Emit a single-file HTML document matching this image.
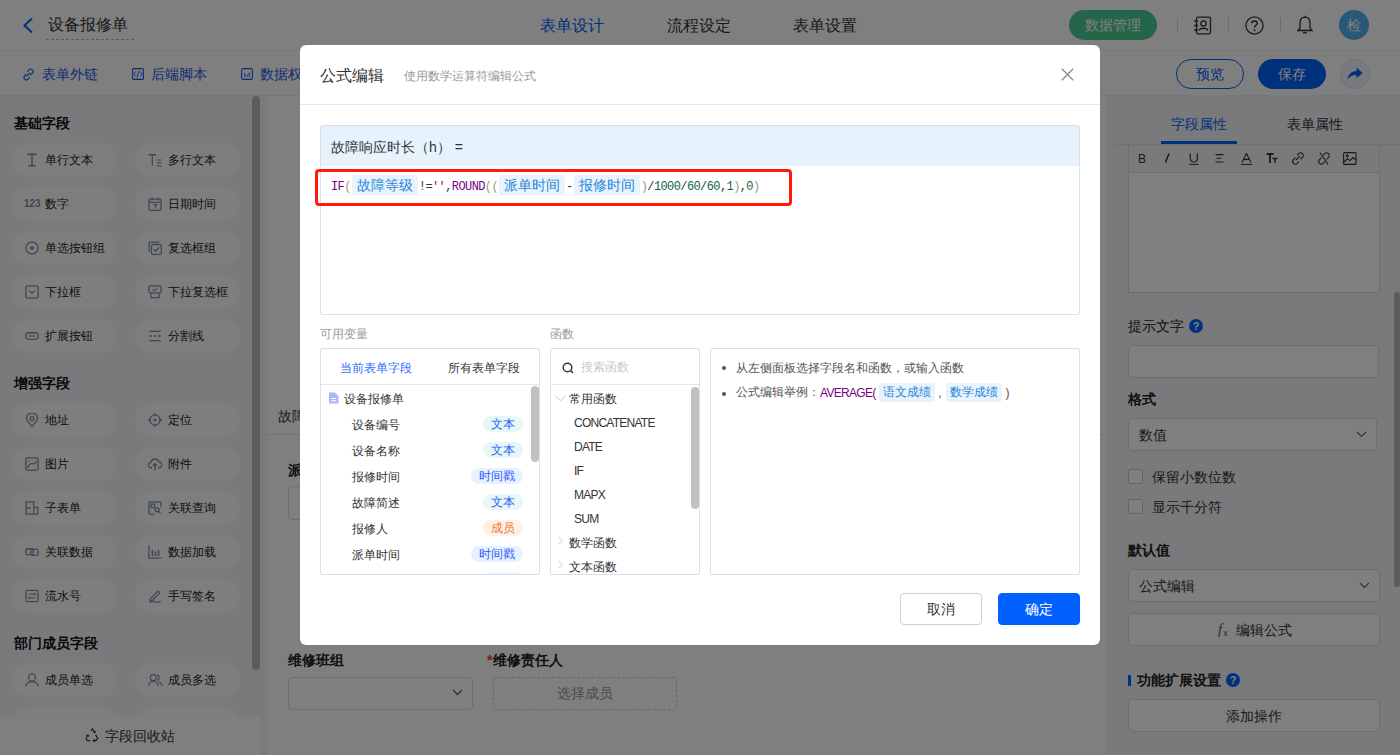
<!DOCTYPE html>
<html><head><meta charset="utf-8">
<style>
*{box-sizing:border-box;margin:0;padding:0}
html,body{width:1400px;height:755px;overflow:hidden;background:#fff;font-family:"Liberation Sans",sans-serif;color:#333}
.abs{position:absolute}
svg{display:block}
/* header */
#hdr{position:absolute;left:0;top:0;width:1400px;height:51px;background:#fff;border-bottom:1px solid #eceef2}
#tb{position:absolute;left:0;top:51px;width:1400px;height:45px;background:#fff;border-bottom:1px solid #eef0f3}
#side{position:absolute;left:0;top:96px;width:268px;height:659px;background:#f4f5f8;overflow:hidden}
#canvas{position:absolute;left:268px;top:96px;width:838px;height:659px;background:#fff}
#rp{position:absolute;left:1106px;top:96px;width:294px;height:659px;background:#f4f5f8;overflow:hidden}
.t{position:absolute;white-space:nowrap;line-height:1}
.pill{position:absolute;width:105px;height:34px;border-radius:17px;background:#fdfdfe}
.pill .ic{position:absolute;left:13px;top:10px}
.pill span{position:absolute;left:33px;top:11px;font-size:12px;line-height:12px;color:#222;white-space:nowrap}
.sh{position:absolute;left:14px;font-size:14px;font-weight:bold;color:#111;line-height:14px;white-space:nowrap}
#ov{position:absolute;left:0;top:0;width:1400px;height:755px;background:rgba(0,0,0,.5)}
#modal{position:absolute;left:300px;top:45px;width:800px;height:600px;background:#fff;border-radius:6px;overflow:hidden}

.mt{position:absolute;white-space:nowrap;line-height:1}
.code{position:absolute;left:10px;top:49px;height:20px;display:flex;align-items:center;font-family:"Liberation Mono",monospace;font-size:12px;letter-spacing:-0.6px;white-space:pre;color:#333}
.kw,.br,.nm,.st,.op{position:relative;top:1.5px}.kw{color:#770088}.br{color:#a09a78}.nm{color:#116644}.st{color:#aa1111}
.tok{display:inline-block;letter-spacing:0;height:20px;line-height:20px;padding:0 5px;margin:0 1px;border-radius:3px;background:#e8f3fd;color:#1f87d6;font-family:"Liberation Sans",sans-serif;font-size:14px}
.panel{position:absolute;top:303px;height:227px;border:1px solid #dcdfe6;border-radius:2px;background:#fff;overflow:hidden}
.vi{position:absolute;left:31px;font-size:12px;line-height:12px;color:#333;white-space:nowrap}
.tag{position:absolute;right:16px;height:16px;line-height:16px;padding:0 8px;border-radius:8px;font-size:12px;white-space:nowrap}
.tg1{background:#e6f7f5;color:#2a5cff}.tg2{background:#e8f1ff;color:#2a5cff}.tg3{background:#fff0e6;color:#f07a30}
.fi{position:absolute;left:23px;font-size:12px;line-height:12px;color:#333;white-space:nowrap;letter-spacing:-0.75px}
.fg{position:absolute;left:18px;font-size:12px;line-height:12px;color:#333;white-space:nowrap}
.btn{position:absolute;top:548px;height:32px;border-radius:4px;font-size:14px;line-height:30px;text-align:center}
</style></head><body>

<!-- ===== HEADER ===== -->
<div id="hdr">
  <svg class="abs" style="left:22px;top:17px" width="12" height="17" viewBox="0 0 12 17"><path d="M10 1.5 L2.5 8.5 L10 15.5" fill="none" stroke="#0062fa" stroke-width="2"/></svg>
  <div class="t" style="left:48px;top:17px;font-size:16px;color:#333">设备报修单</div>
  <div class="abs" style="left:46px;top:39px;width:88px;border-top:1px dashed #bbb"></div>
  <div class="t" style="left:540px;top:18px;font-size:16px;color:#0062fa">表单设计</div>
  <div class="t" style="left:667px;top:18px;font-size:16px;color:#333">流程设定</div>
  <div class="t" style="left:793px;top:18px;font-size:16px;color:#333">表单设置</div>
  <div class="abs" style="left:1069px;top:10px;width:88px;height:30px;background:#4acb94;border-radius:15px"></div>
  <div class="t" style="left:1085px;top:18px;font-size:14px;color:#fff">数据管理</div>
  <div class="abs" style="left:1177px;top:18px;width:1px;height:14px;background:#d8d8d8"></div>
  <svg class="abs" style="left:1193px;top:16px" width="19" height="19" viewBox="0 0 19 19"><g fill="none" stroke="#333" stroke-width="1.3"><rect x="3.5" y="1.2" width="14" height="16.6" rx="1.5"/><circle cx="10.5" cy="7.5" r="2.6"/><path d="M6.2 14.5 C6.8 11.5 14.2 11.5 14.8 14.5"/><path d="M1.2 5 H5 M1.2 9.5 H5 M1.2 14 H5"/></g></svg>
  <div class="abs" style="left:1228px;top:18px;width:1px;height:14px;background:#d8d8d8"></div>
  <svg class="abs" style="left:1245px;top:16px" width="19" height="19" viewBox="0 0 19 19"><circle cx="9.5" cy="9.5" r="8.6" fill="none" stroke="#333" stroke-width="1.3"/><path d="M6.8 7.3 C6.8 4.2 12.2 4.2 12.2 7.3 C12.2 9.4 9.5 9.4 9.5 11.6" fill="none" stroke="#333" stroke-width="1.4"/><circle cx="9.5" cy="14.2" r="0.95" fill="#333"/></svg>
  <div class="abs" style="left:1280px;top:18px;width:1px;height:14px;background:#d8d8d8"></div>
  <svg class="abs" style="left:1297px;top:15px" width="16" height="20" viewBox="0 0 16 20"><g fill="none" stroke="#333" stroke-width="1.3"><path d="M8 2.2 C4.5 2.2 3 5 3 8 V13 L1 15.5 H15 L13 13 V8 C13 5 11.5 2.2 8 2.2 Z"/><path d="M8 0.8 V2.2"/><path d="M6 17.8 H10"/></g></svg>
  <div class="abs" style="left:1339px;top:10px;width:30px;height:30px;background:#4fb0f0;border-radius:50%"></div>
  <div class="t" style="left:1347px;top:18px;font-size:14px;color:#fff">检</div>
</div>

<!-- ===== TOOLBAR ===== -->
<div id="tb">
  <svg class="abs" style="left:22px;top:17px" width="13" height="13" viewBox="0 0 13 13"><g fill="none" stroke="#1f55e6" stroke-width="1.2"><path d="M5.2 3.6 L7 1.8 a2.4 2.4 0 0 1 3.4 3.4 L8.6 7"/><path d="M7.8 9.4 L6 11.2 a2.4 2.4 0 0 1 -3.4 -3.4 L4.4 6"/><path d="M4.6 8.4 L8.4 4.6"/></g></svg>
  <div class="t" style="left:42px;top:16px;font-size:14px;color:#1f55e6">表单外链</div>
  <svg class="abs" style="left:132px;top:17px" width="12" height="12" viewBox="0 0 12 12"><g fill="none" stroke="#1f55e6" stroke-width="1.1"><rect x="0.6" y="0.6" width="10.8" height="10.8" rx="1"/><path d="M3.8 3.5 L1.8 6 L3.8 8.5 M8.2 3.5 L10.2 6 L8.2 8.5 M7 2.5 L5 9.5" stroke-width="0.9"/></g></svg>
  <div class="t" style="left:151px;top:16px;font-size:14px;color:#1f55e6">后端脚本</div>
  <svg class="abs" style="left:241px;top:17px" width="12" height="12" viewBox="0 0 12 12"><g fill="none" stroke="#1f55e6" stroke-width="1.1"><rect x="0.6" y="0.6" width="10.8" height="10.8" rx="1.5"/><path d="M3.8 5 V8.8 M6 6.5 V8.8 M8.2 4.5 V8.8" stroke-width="1"/></g></svg>
  <div class="t" style="left:260px;top:16px;font-size:14px;color:#1f55e6">数据权限</div>
  <div class="abs" style="left:1176px;top:8px;width:68px;height:30px;border:1.5px solid #0062fa;border-radius:15px"></div>
  <div class="t" style="left:1196px;top:16px;font-size:14px;color:#0062fa">预览</div>
  <div class="abs" style="left:1258px;top:8px;width:68px;height:30px;background:#0062fa;border-radius:15px"></div>
  <div class="t" style="left:1278px;top:16px;font-size:14px;color:#fff">保存</div>
  <div class="abs" style="left:1340px;top:8px;width:30px;height:30px;background:#f0f4fe;border:1px solid #dde4f4;border-radius:50%"></div>
  <svg class="abs" style="left:1346px;top:15px" width="18" height="16" viewBox="0 0 18 16"><path d="M10.5 1.5 L16.5 7 L10.5 12.2 V9 C6 9 3.5 10.5 1.5 14 C2 8.5 5 5.5 10.5 5 Z" fill="#0062fa"/></svg>
</div>

<!-- ===== SIDEBAR ===== -->
<div id="side">
  <div class="sh" style="top:20px">基础字段</div>
  <div class="pill" style="left:12px;top:47px"><svg class="ic" width="14" height="14" viewBox="0 0 12 12"><g fill="none" stroke="#7d8db0" stroke-width="1.1"><path d="M1.8 1 H10.2 M6 1 V11 M2.8 11 H9.2" stroke-width="1.3"/></g></svg><span>单行文本</span></div>
  <div class="pill" style="left:135px;top:47px"><svg class="ic" width="14" height="14" viewBox="0 0 12 12"><g fill="none" stroke="#7d8db0" stroke-width="1.1"><path d="M0.5 1.5 H7 M3.7 1.5 V11"/><path d="M7.5 6 H11.5 M7.5 8.5 H11.5 M7.5 11 H11.5" stroke-width="1"/></g></svg><span>多行文本</span></div>
  <div class="pill" style="left:12px;top:91px"><b class="ic" style="left:12px;top:12px;font-size:10px;line-height:10px;font-weight:bold;color:#7d8db0;letter-spacing:-0.1px">123</b><span>数字</span></div>
  <div class="pill" style="left:135px;top:91px"><svg class="ic" width="14" height="14" viewBox="0 0 12 12"><g fill="none" stroke="#7d8db0" stroke-width="1.1"><rect x="0.8" y="1.8" width="10.4" height="9.6" rx="1"/><path d="M0.8 4.6 H11.2 M3.5 0.5 V3 M8.5 0.5 V3"/><path d="M4.5 6.6 H7.5 L5.8 9.8" stroke-width="1"/></g></svg><span>日期时间</span></div>
  <div class="pill" style="left:12px;top:135px"><svg class="ic" width="14" height="14" viewBox="0 0 12 12"><g fill="none" stroke="#7d8db0" stroke-width="1.1"><circle cx="6" cy="6" r="5.2"/><circle cx="6" cy="6" r="1.6" fill="#7d8db0" stroke="none"/></g></svg><span>单选按钮组</span></div>
  <div class="pill" style="left:135px;top:135px"><svg class="ic" width="14" height="14" viewBox="0 0 12 12"><g fill="none" stroke="#7d8db0" stroke-width="1.1"><path d="M1 9.5 V1.5 Q1 1 1.5 1 H9.5"/><rect x="3" y="3" width="8.4" height="8.4" rx="1"/><path d="M4.8 7 L6.6 8.8 L9.6 5.4"/></g></svg><span>复选框组</span></div>
  <div class="pill" style="left:12px;top:179px"><svg class="ic" width="14" height="14" viewBox="0 0 12 12"><g fill="none" stroke="#7d8db0" stroke-width="1.1"><rect x="0.8" y="0.8" width="10.4" height="10.4" rx="1"/><path d="M3.6 5 L6 7.2 L8.4 5"/></g></svg><span>下拉框</span></div>
  <div class="pill" style="left:135px;top:179px"><svg class="ic" width="14" height="14" viewBox="0 0 12 12"><g fill="none" stroke="#7d8db0" stroke-width="1.1"><rect x="0.8" y="0.8" width="10.4" height="6" rx="1"/><path d="M2.5 6.8 V10.8 H9.5 V6.8"/><path d="M4 3.8 L5.6 5 L8 2.4" stroke-width="1"/></g></svg><span>下拉复选框</span></div>
  <div class="pill" style="left:12px;top:223px"><svg class="ic" width="14" height="14" viewBox="0 0 12 12"><g fill="none" stroke="#7d8db0" stroke-width="1.1"><rect x="0.6" y="3.2" width="10.8" height="5.6" rx="2.8"/><path d="M3.5 6 H8.5"/></g></svg><span>扩展按钮</span></div>
  <div class="pill" style="left:135px;top:223px"><svg class="ic" width="14" height="14" viewBox="0 0 12 12"><g fill="none" stroke="#7d8db0" stroke-width="1.1"><path d="M1 2 H11 M1 6 H3.5 M5 6 H7 M8.5 6 H11 M1 10 H11" stroke-width="1.1"/></g></svg><span>分割线</span></div>
  <div class="sh" style="top:280px">增强字段</div>
  <div class="pill" style="left:12px;top:307px"><svg class="ic" width="14" height="14" viewBox="0 0 12 12"><g fill="none" stroke="#7d8db0" stroke-width="1.1"><path d="M6 11.4 C2.5 8 1.2 6 1.2 4.6 A4.8 4.6 0 0 1 10.8 4.6 C10.8 6 9.5 8 6 11.4 Z"/><circle cx="6" cy="4.8" r="1.6"/></g></svg><span>地址</span></div>
  <div class="pill" style="left:135px;top:307px"><svg class="ic" width="14" height="14" viewBox="0 0 12 12"><g fill="none" stroke="#7d8db0" stroke-width="1.1"><circle cx="6" cy="6" r="4.4"/><circle cx="6" cy="6" r="1.2" fill="#7d8db0" stroke="none"/><path d="M6 0 V2.4 M6 9.6 V12 M0 6 H2.4 M9.6 6 H12"/></g></svg><span>定位</span></div>
  <div class="pill" style="left:12px;top:351px"><svg class="ic" width="14" height="14" viewBox="0 0 12 12"><g fill="none" stroke="#7d8db0" stroke-width="1.1"><rect x="0.8" y="0.8" width="10.4" height="10.4" rx="1"/><path d="M2.2 9.5 C3 6 5 5.5 7 5.8 C8.5 6 9.5 5 10 3.5 M2.8 3.5 L3.8 3"/></g></svg><span>图片</span></div>
  <div class="pill" style="left:135px;top:351px"><svg class="ic" width="14" height="14" viewBox="0 0 12 12"><g fill="none" stroke="#7d8db0" stroke-width="1.1"><path d="M3.5 9.2 H2.8 A2.3 2.3 0 0 1 2.6 4.6 A3.5 3.5 0 0 1 9.4 4.2 A2.5 2.5 0 0 1 9.2 9.2 H8.5"/><path d="M6 11.5 V6 M4.2 7.6 L6 5.8 L7.8 7.6"/></g></svg><span>附件</span></div>
  <div class="pill" style="left:12px;top:395px"><svg class="ic" width="14" height="14" viewBox="0 0 12 12"><g fill="none" stroke="#7d8db0" stroke-width="1.1"><path d="M1 0.8 H7.5 V11.2 H1 Z M1 6 H5"/><path d="M7.5 5.5 H11 V11.2 H7.5"/></g></svg><span>子表单</span></div>
  <div class="pill" style="left:135px;top:395px"><svg class="ic" width="14" height="14" viewBox="0 0 12 12"><g fill="none" stroke="#7d8db0" stroke-width="1.1"><path d="M11.2 5.5 V1.8 Q11.2 0.8 10.2 0.8 H1.8 Q0.8 0.8 0.8 1.8 V10.2 Q0.8 11.2 1.8 11.2 H5.5"/><rect x="2.6" y="2.6" width="3" height="3"/><circle cx="7.8" cy="7.6" r="1.7"/><path d="M9 8.8 L10.8 10.6"/></g></svg><span>关联查询</span></div>
  <div class="pill" style="left:12px;top:439px"><svg class="ic" width="14" height="14" viewBox="0 0 12 12"><g fill="none" stroke="#7d8db0" stroke-width="1.1"><rect x="0.8" y="3.2" width="6.2" height="5" rx="1.2"/><rect x="5" y="3.8" width="6.2" height="5" rx="1.2"/></g></svg><span>关联数据</span></div>
  <div class="pill" style="left:135px;top:439px"><svg class="ic" width="14" height="14" viewBox="0 0 12 12"><g fill="none" stroke="#7d8db0" stroke-width="1.1"><path d="M0.8 0.5 V11.2 H11.5"/><path d="M3.8 9.5 V4 M6.4 9.5 V5.5 M9 9.5 V4.5" stroke-width="1.4"/></g></svg><span>数据加载</span></div>
  <div class="pill" style="left:12px;top:483px"><svg class="ic" width="14" height="14" viewBox="0 0 12 12"><g fill="none" stroke="#7d8db0" stroke-width="1.1"><rect x="0.8" y="1.2" width="10.4" height="9.6" rx="1"/><path d="M3 4.5 H9 L7.6 3.3 M9 7.5 H3 L4.4 8.7" stroke-width="1"/></g></svg><span>流水号</span></div>
  <div class="pill" style="left:135px;top:483px"><svg class="ic" width="14" height="14" viewBox="0 0 12 12"><g fill="none" stroke="#7d8db0" stroke-width="1.1"><path d="M2.2 8.2 L8.2 2.2 A1.2 1.2 0 0 1 9.8 3.8 L3.8 9.8 L1.8 10.2 Z"/><path d="M1 11.5 C3 10.5 5 10.5 6.5 11.2 C8 11.8 9.5 11 11 10.8" stroke-width="1"/></g></svg><span>手写签名</span></div>
  <div class="sh" style="top:540px">部门成员字段</div>
  <div class="pill" style="left:12px;top:567px"><svg class="ic" width="14" height="14" viewBox="0 0 12 12"><g fill="none" stroke="#7d8db0" stroke-width="1.1"><circle cx="6" cy="3.8" r="3"/><path d="M0.8 11.6 C1 8.5 3 7.4 6 7.4 C9 7.4 11 8.5 11.2 11.6"/></g></svg><span>成员单选</span></div>
  <div class="pill" style="left:135px;top:567px"><svg class="ic" width="15" height="14" viewBox="0 0 14 12"><g fill="none" stroke="#7d8db0" stroke-width="1.1"><circle cx="5" cy="3.8" r="2.8"/><path d="M0.6 11.6 C0.8 8.6 2.4 7.4 5 7.4 C7.6 7.4 9.2 8.6 9.4 11.6"/><path d="M8.2 1.2 A2.7 2.7 0 0 1 8.6 6.4 M10 7.8 C11.8 8.3 12.8 9.6 13 11.6"/></g></svg><span>成员多选</span></div>
  <div class="pill" style="left:12px;top:611px"><span>部门单选</span></div>
  <div class="pill" style="left:135px;top:611px"><span>部门多选</span></div>
  <div class="abs" style="left:252px;top:0px;width:8px;height:574px;background:#b8b8b8;border-radius:4px"></div>
  <div class="abs" style="left:0;top:621px;width:260px;height:38px;background:#fff"></div>
  <svg class="abs" style="left:85px;top:632px" width="15" height="14" viewBox="0 0 15 14"><g fill="none" stroke="#333" stroke-width="1.1"><path d="M5.8 2.6 L7.5 0.8 L9.6 4.4"/><path d="M10.6 6.6 L12.8 10.4 L10.8 12.6 H8.5"/><path d="M5.5 12.6 H2.2 L1 10.5 L3 7"/><path d="M8.2 3.8 L9.9 4.5 L10.4 2.8 M9.6 11.1 L8.3 12.6 L9.6 13.8 M3.8 8.6 L3.1 6.9 L1.4 7.5"/></g></svg>
  <div class="t" style="left:105px;top:633px;font-size:14px;color:#333">字段回收站</div>
</div>

<!-- ===== CANVAS ===== -->
<div id="canvas">
  <div class="t" style="left:10px;top:313px;font-size:14px;color:#333">故障响应</div>
  <div class="abs" style="left:0;top:338px;width:838px;height:1px;background:#e4e4e4"></div>
  <div class="t" style="left:20px;top:367px;font-size:14px;font-weight:bold;color:#222">派单时间</div>
  <div class="abs" style="left:20px;top:390px;width:184px;height:34px;border:1px solid #dcdcdc;border-radius:4px"></div>
  <div class="t" style="left:20px;top:557px;font-size:14px;font-weight:bold;color:#222">维修班组</div>
  <div class="abs" style="left:20px;top:581px;width:185px;height:33px;border:1px solid #dcdcdc;border-radius:4px"></div>
  <svg class="abs" style="left:184px;top:593px" width="11" height="7" viewBox="0 0 11 7"><path d="M1 1 L5.5 5.5 L10 1" fill="none" stroke="#666" stroke-width="1.3"/></svg>
  <div class="t" style="left:219px;top:557px;font-size:14px;font-weight:bold;color:#e23b3b">*</div>
  <div class="t" style="left:225px;top:557px;font-size:14px;font-weight:bold;color:#222">维修责任人</div>
  <div class="abs" style="left:225px;top:581px;width:184px;height:33px;border:1px dashed #cfcfcf;border-radius:4px"></div>
  <div class="t" style="left:289px;top:590px;font-size:14px;color:#999">选择成员</div>
</div>

<!-- ===== RIGHT PANEL ===== -->
<div id="rp">
  <div class="t" style="left:65px;top:21px;font-size:14px;color:#0062fa">字段属性</div>
  <div class="t" style="left:181px;top:21px;font-size:14px;color:#333">表单属性</div>
  <div class="abs" style="left:8px;top:48px;width:286px;height:1px;background:#e2e4ea"></div>
  <div class="abs" style="left:55px;top:45px;width:76px;height:3px;background:#0062fa"></div>
  <div class="abs" style="left:22px;top:49px;width:252px;height:148px;border:1px solid #dcdde2;border-top:none;background:#fff"></div>
  <div class="abs" style="left:23px;top:49px;width:250px;height:28px;background:#f4f5f8;border-bottom:1px solid #dcdde2"></div>
  <div class="t" style="left:32px;top:57px;font-size:12px;color:#333">B</div>
  <svg class="abs" style="left:58px;top:57px" width="6" height="10" viewBox="0 0 6 10"><path d="M5 0.5 L1.5 9.5" stroke="#333" stroke-width="1.5"/></svg>
  <svg class="abs" style="left:83px;top:57px" width="10" height="12" viewBox="0 0 10 12"><path d="M1.3 0.5 V5.5 A3.5 3.5 0 0 0 8.3 5.5 V0.5" fill="none" stroke="#333" stroke-width="1.2"/><path d="M0 11.4 H9.5" stroke="#333" stroke-width="1"/></svg>
  <svg class="abs" style="left:109px;top:58px" width="9" height="9" viewBox="0 0 9 9"><path d="M0.5 0.6 H8.5 M1.5 4.2 H6.5 M0.5 8 H8.5" stroke="#333" stroke-width="1.1"/></svg>
  <svg class="abs" style="left:135px;top:57px" width="11" height="12" viewBox="0 0 11 12"><path d="M1 9.5 L5.5 0.5 L10 9.5 M2.6 6.4 H8.4" fill="none" stroke="#333" stroke-width="1.1"/><path d="M0 11.4 H11" stroke="#333" stroke-width="1"/></svg>
  <svg class="abs" style="left:160px;top:57px" width="12" height="11" viewBox="0 0 12 11"><path d="M0.5 1 H7.5 M4 1 V10" stroke="#333" stroke-width="1.8"/><path d="M6.5 5.5 H11.5 M9 5.5 V10" stroke="#333" stroke-width="1.3"/></svg>
  <svg class="abs" style="left:185px;top:56px" width="14" height="13" viewBox="0 0 14 13"><g fill="none" stroke="#333" stroke-width="1.1"><path d="M6.2 3.3 L7.8 1.7 a2.6 2.6 0 0 1 3.7 3.7 L9.5 7.4"/><path d="M7.8 9.7 L6.2 11.3 a2.6 2.6 0 0 1 -3.7 -3.7 L4.5 5.6"/><path d="M5 8 L9 4"/></g></svg>
  <svg class="abs" style="left:211px;top:56px" width="14" height="13" viewBox="0 0 14 13"><g fill="none" stroke="#333" stroke-width="1.1"><path d="M6.2 3.3 L7.8 1.7 a2.6 2.6 0 0 1 3.7 3.7 L9.5 7.4"/><path d="M7.8 9.7 L6.2 11.3 a2.6 2.6 0 0 1 -3.7 -3.7 L4.5 5.6"/><path d="M3 0.5 L11 12.5"/></g></svg>
  <svg class="abs" style="left:237px;top:56px" width="14" height="13" viewBox="0 0 14 13"><g fill="none" stroke="#333" stroke-width="1.1"><rect x="0.6" y="0.6" width="12.4" height="11.8" rx="1"/><path d="M1 10 L4.5 6.8 L7 8.6 L10 5.5 L13 8"/><circle cx="4.3" cy="3.8" r="1"/></g></svg>

  <div class="t" style="left:22px;top:223px;font-size:14px;font-weight:500;color:#222">提示文字</div>
  <div class="abs" style="left:83px;top:223px;width:14px;height:14px;border-radius:50%;background:#0062fa;color:#fff;font-size:11px;font-weight:bold;line-height:14px;text-align:center">?</div>
  <div class="abs" style="left:22px;top:249px;width:251px;height:33px;border:1px solid #dcdde2;border-radius:4px;background:#fff"></div>
  <div class="t" style="left:22px;top:296px;font-size:14px;font-weight:bold;color:#222">格式</div>
  <div class="abs" style="left:22px;top:322px;width:249px;height:33px;border:1px solid #dcdde2;border-radius:4px;background:#fff"></div>
  <div class="t" style="left:33px;top:332px;font-size:14px;color:#333">数值</div>
  <svg class="abs" style="left:250px;top:335px" width="11" height="7" viewBox="0 0 11 7"><path d="M1 1 L5.5 5.5 L10 1" fill="none" stroke="#666" stroke-width="1.2"/></svg>
  <div class="abs" style="left:22px;top:373px;width:15px;height:15px;border:1px solid #c8c9ce;border-radius:2px;background:#fff"></div>
  <div class="t" style="left:46px;top:374px;font-size:14px;color:#333">保留小数位数</div>
  <div class="abs" style="left:22px;top:403px;width:15px;height:15px;border:1px solid #c8c9ce;border-radius:2px;background:#fff"></div>
  <div class="t" style="left:46px;top:404px;font-size:14px;color:#333">显示千分符</div>
  <div class="t" style="left:22px;top:447px;font-size:14px;font-weight:bold;color:#222">默认值</div>
  <div class="abs" style="left:22px;top:473px;width:252px;height:33px;border:1px solid #dcdde2;border-radius:4px;background:#fff"></div>
  <div class="t" style="left:33px;top:483px;font-size:14px;color:#333">公式编辑</div>
  <svg class="abs" style="left:253px;top:486px" width="11" height="7" viewBox="0 0 11 7"><path d="M1 1 L5.5 5.5 L10 1" fill="none" stroke="#666" stroke-width="1.2"/></svg>
  <div class="abs" style="left:22px;top:517px;width:252px;height:33px;border:1px solid #dcdde2;border-radius:4px;background:#fff"></div>
  <div class="t" style="left:112px;top:526px;font-size:15px;font-style:italic;color:#555;font-family:'Liberation Serif',serif">f<span style="font-size:9px;font-style:normal;font-family:'Liberation Sans',sans-serif;position:relative;top:2px;left:1px">x</span></div>
  <div class="t" style="left:130px;top:527px;font-size:14px;color:#333">编辑公式</div>
  <div class="abs" style="left:22px;top:579px;width:3px;height:11px;background:#0062fa"></div>
  <div class="t" style="left:31px;top:577px;font-size:14px;font-weight:bold;color:#222">功能扩展设置</div>
  <div class="abs" style="left:120px;top:577px;width:14px;height:14px;border-radius:50%;background:#0062fa;color:#fff;font-size:11px;font-weight:bold;line-height:14px;text-align:center">?</div>
  <div class="abs" style="left:22px;top:603px;width:252px;height:33px;border:1px solid #dcdde2;border-radius:4px;background:#fff"></div>
  <div class="t" style="left:120px;top:613px;font-size:14px;color:#333">添加操作</div>
  <div class="abs" style="left:288px;top:196px;width:6px;height:295px;background:#b8b8b8;border-radius:3px"></div>
</div>

<div id="ov"></div>

<!-- ===== MODAL ===== -->
<div id="modal">
  <div class="mt" style="left:20px;top:23px;font-size:16px;color:#333">公式编辑</div>
  <div class="mt" style="left:104px;top:25px;font-size:12px;color:#999">使用数学运算符编辑公式</div>
  <svg class="abs" style="left:761px;top:23px" width="13" height="13" viewBox="0 0 13 13"><path d="M0.8 0.8 L12.2 12.2 M12.2 0.8 L0.8 12.2" stroke="#8a8a8a" stroke-width="1.3"/></svg>
  <div class="abs" style="left:0;top:59px;width:800px;height:1px;background:#e8e8e8"></div>

  <div class="abs" style="left:20px;top:80px;width:760px;height:190px;border:1px solid #dcdfe6;border-radius:2px;overflow:hidden">
    <div class="abs" style="left:0;top:0;width:760px;height:40px;background:#e6f2fc"></div>
    <div class="mt" style="left:10px;top:14px;font-size:14px;color:#333">故障响应时长（h） =</div>
    <div class="code"><span class="kw">IF</span><span class="br">(</span><span class="tok">故障等级</span><span class="op">!=</span><span class="st">''</span><span class="op">,</span><span class="kw">ROUND</span><span class="br">((</span><span class="tok">派单时间</span><span class="op">-</span><span class="tok">报修时间</span><span class="br">)</span><span class="op">/</span><span class="nm">1000</span><span class="op">/</span><span class="nm">60</span><span class="op">/</span><span class="nm">60</span><span class="op">,</span><span class="nm">1</span><span class="br">)</span><span class="op">,</span><span class="nm">0</span><span class="br">)</span></div>
  </div>
  <div class="abs" style="left:15px;top:124px;width:477px;height:37px;border:3px solid #ff1a0a;border-radius:4px"></div>

  <div class="mt" style="left:20px;top:283px;font-size:12px;color:#999">可用变量</div>
  <div class="mt" style="left:250px;top:283px;font-size:12px;color:#999">函数</div>

  <div class="panel" style="left:20px;width:220px">
    <div class="mt" style="left:19px;top:13px;font-size:12px;color:#2f6bff">当前表单字段</div>
    <div class="mt" style="left:127px;top:13px;font-size:12px;color:#333">所有表单字段</div>
    <div class="abs" style="left:0;top:35px;width:220px;height:1px;background:#e4e7ed"></div>
    <svg class="abs" style="left:7px;top:43px" width="11" height="12" viewBox="0 0 11 12"><path d="M1 0.5 H7 L10.5 4 V11.5 H1 Z" fill="#a9b8f5"/><path d="M3 6.5 H8 M3 8.8 H8" stroke="#fff" stroke-width="1"/></svg>
    <div class="mt" style="left:23px;top:44px;font-size:12px;color:#333">设备报修单</div>
    <div class="vi" style="top:70px">设备编号</div>
    <div class="tag tg1" style="top:67px">文本</div>
    <div class="vi" style="top:96px">设备名称</div>
    <div class="tag tg1" style="top:93px">文本</div>
    <div class="vi" style="top:122px">报修时间</div>
    <div class="tag tg2" style="top:119px">时间戳</div>
    <div class="vi" style="top:148px">故障简述</div>
    <div class="tag tg1" style="top:145px">文本</div>
    <div class="vi" style="top:174px">报修人</div>
    <div class="tag tg3" style="top:171px">成员</div>
    <div class="vi" style="top:200px">派单时间</div>
    <div class="tag tg2" style="top:197px">时间戳</div>
    <div class="tag tg1" style="top:223px">文本</div>
    <div class="abs" style="left:210px;top:37px;width:8px;height:76px;border-radius:4px;background:#c1c1c1"></div>
  </div>

  <div class="panel" style="left:250px;width:150px">
    <svg class="abs" style="left:11px;top:13px" width="12" height="12" viewBox="0 0 12 12"><circle cx="5.5" cy="5.5" r="4.3" fill="none" stroke="#333" stroke-width="1.4"/><path d="M8.5 8.5 L11 11" stroke="#333" stroke-width="1.4"/></svg>
    <div class="mt" style="left:30px;top:12px;font-size:12px;color:#c6cad6">搜索函数</div>
    <div class="abs" style="left:0;top:35px;width:150px;height:1px;background:#e4e7ed"></div>
    <svg class="abs" style="left:4px;top:46px" width="11" height="7" viewBox="0 0 11 7"><path d="M0.5 0.8 L5.5 5.8 L10.5 0.8" fill="none" stroke="#c5cbdc" stroke-width="1"/></svg>
    <div class="fg" style="top:44px">常用函数</div>
    <div class="fi" style="top:68px">CONCATENATE</div>
    <div class="fi" style="top:92px">DATE</div>
    <div class="fi" style="top:116px">IF</div>
    <div class="fi" style="top:140px">MAPX</div>
    <div class="fi" style="top:164px">SUM</div>
    <svg class="abs" style="left:7px;top:187px" width="5" height="9" viewBox="0 0 5 9"><path d="M0.8 0.8 L4.2 4.5 L0.8 8.2" fill="none" stroke="#c5cbdc" stroke-width="1"/></svg>
    <div class="fg" style="top:188px">数学函数</div>
    <svg class="abs" style="left:7px;top:211px" width="5" height="9" viewBox="0 0 5 9"><path d="M0.8 0.8 L4.2 4.5 L0.8 8.2" fill="none" stroke="#c5cbdc" stroke-width="1"/></svg>
    <div class="fg" style="top:212px">文本函数</div>
    <div class="abs" style="left:140px;top:38px;width:8px;height:122px;border-radius:4px;background:#c1c1c1"></div>
  </div>

  <div class="panel" style="left:410px;width:370px">
    <div class="abs" style="left:11px;top:17px;width:4px;height:4px;border-radius:50%;background:#555"></div>
    <div class="mt" style="left:25px;top:13px;font-size:12px;color:#555">从左侧面板选择字段名和函数，或输入函数</div>
    <div class="abs" style="left:11px;top:43px;width:4px;height:4px;border-radius:50%;background:#555"></div>
    <div class="abs" style="left:25px;top:34px;height:19px;display:flex;align-items:center;white-space:nowrap;font-size:12px;color:#555">公式编辑举例：<span style="color:#770088;letter-spacing:-0.7px">AVERAGE(</span><span class="tok" style="height:19px;line-height:19px;font-size:12px;padding:0 4px;margin:0 0 0 3px">语文成绩</span><span style="display:inline-block;width:11px;text-align:center">,</span><span class="tok" style="height:19px;line-height:19px;font-size:12px;padding:0 4px;margin:0">数学成绩</span><span style="margin-left:4px">)</span></div>
  </div>

  <div class="btn" style="left:600px;width:82px;border:1px solid #d0d0d0;color:#333;background:#fff">取消</div>
  <div class="btn" style="left:698px;width:82px;background:#0061ff;color:#fff;border:1px solid #0061ff">确定</div>
</div>

</body></html>
